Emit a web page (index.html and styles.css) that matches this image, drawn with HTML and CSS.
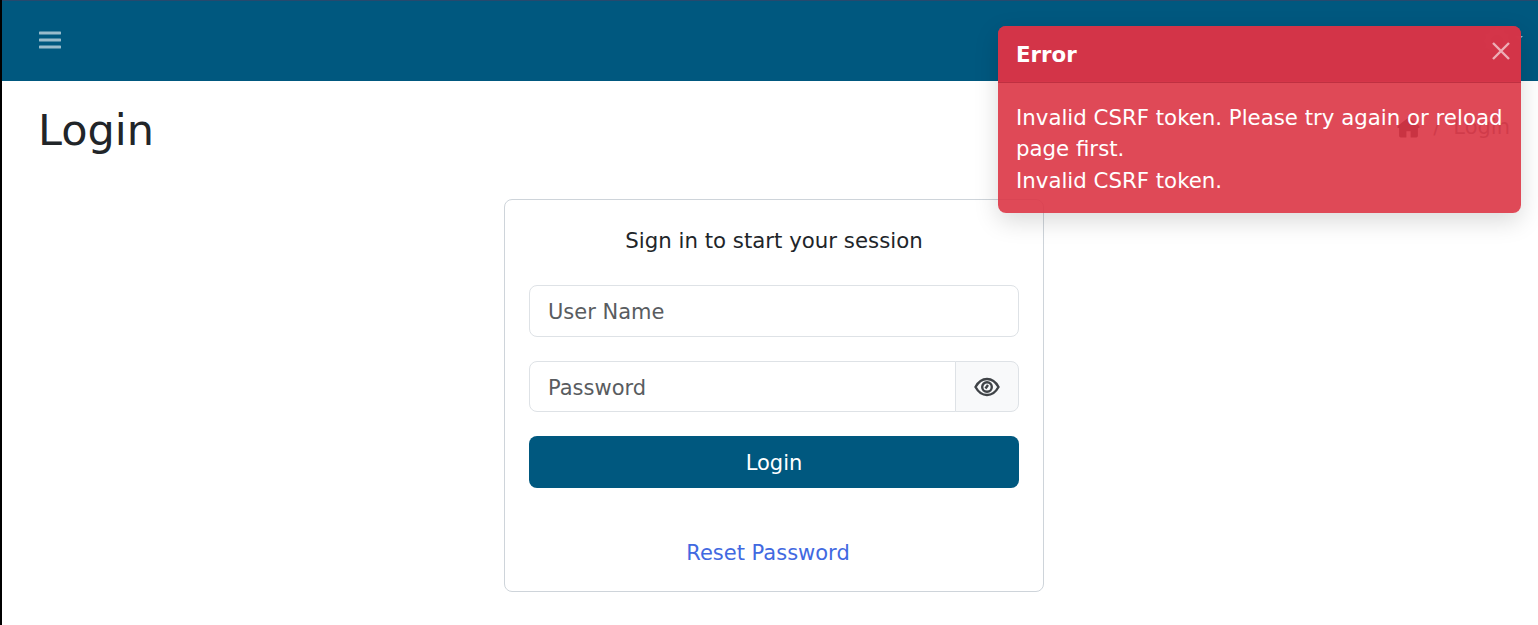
FILE: index.html
```html
<!DOCTYPE html>
<html lang="en">
<head>
    <meta charset="UTF-8">
    <meta name="viewport" content="width=device-width, initial-scale=1.0">
    <title>Login</title>
    <link rel="stylesheet" href="styles.css">
</head>
<body>
    <div class="wrapper">
        <nav class="topbar">
            <button class="menu-btn" aria-label="Menu">
                <svg width="22" height="18" viewBox="0 0 22 18"><path d="M1 2h20M1 9h20M1 16h20" stroke="currentColor" stroke-width="3" stroke-linecap="round"/></svg>
            </button>
            <div class="user-menu">
                <svg class="gear" width="30" height="30" viewBox="0 0 24 24"><path fill="currentColor" fill-rule="evenodd" d="M12 1l2.200 2.600 3.200-1.100.7 3.300 3.300.7-1.100 3.200L23 12l-2.700 2.300 1.100 3.200-3.300.7-.7 3.300-3.200-1.100L12 23l-2.200-2.600-3.200 1.100-.7-3.300-3.300-.7 1.100-3.200L1 12l2.700-2.300-1.100-3.200 3.300-.7.7-3.300 3.200 1.100zM12 7a5 5 0 1 0 0 10 5 5 0 0 0 0-10z"/></svg>
                <span class="caret"></span>
            </div>
        </nav>

        <main class="content">
            <div class="content-header">
                <h1>Login</h1>
                <ol class="breadcrumb">
                    <li class="crumb-home">
                        <svg width="23" height="21" viewBox="0 0 22 20"><path fill="currentColor" fill-rule="evenodd" d="M11 .5L.5 8.500V10.500h1.500v7.500a1.500 1.500 0 0 0 1.500 1.500h15a1.500 1.500 0 0 0 1.500-1.500v-7.500h1.500V8.500zM9 13.500h4v6H9z"/></svg>
                    </li>
                    <li class="sep">/</li>
                    <li>Login</li>
                </ol>
            </div>

            <div class="login-box">
                <p class="login-msg">Sign in to start your session</p>
                <form class="login-form">
                    <input class="form-control" type="text" placeholder="User Name">
                    <div class="input-group">
                        <input class="form-control" type="password" placeholder="Password">
                        <span class="input-addon">
                            <svg width="26" height="20" viewBox="0 0 26 20" fill="none" stroke="currentColor" stroke-width="2.400"><path d="M1.500 10C4.500 4.500 8.500 2 13 2s8.500 2.500 11.500 8C21.500 15.500 17.500 18 13 18S4.500 15.500 1.500 10z"/><circle cx="13" cy="10" r="4.800"/><path d="M11.500 11.500L14 8"/></svg>
                        </span>
                    </div>
                    <button class="login-btn" type="button">Login</button>
                </form>
                <div class="login-links">
                    <a href="#">Reset Password</a>
                </div>
            </div>
        </main>
    </div>

    <div class="toast">
        <div class="toast-header">
            <strong>Error</strong>
            <button class="toast-close" aria-label="Close">
                <svg width="20" height="20" viewBox="0 0 20 20"><path d="M2 2l16 16M18 2L2 18" stroke="currentColor" stroke-width="2.400"/></svg>
            </button>
        </div>
        <div class="toast-body">
            Invalid CSRF token. Please try again or reload page first.<br>
            Invalid CSRF token.
        </div>
    </div>
</body>
</html>
```

FILE: styles.css
```css
* {
    margin: 0;
    padding: 0;
    box-sizing: border-box;
    font-family: "DejaVu Sans", Verdana, sans-serif;
}

body {
    min-height: 100vh;
    background: white;
    color: #212529;
    font-size: 21.3px;
    line-height: 1.5;
    overflow: hidden;
}

.wrapper {
    min-height: 100vh;
    border-left: 2px solid #000;
}

.topbar {
    display: flex;
    justify-content: space-between;
    align-items: center;
    height: 81px;
    padding: 0 15px 2px 37px;
    background: #00587f;
    border-top: 1px solid #27496d;
}

.menu-btn {
    display: flex;
    background: none;
    border: none;
    color: rgba(255,255,255,0.6);
    cursor: pointer;
}

.user-menu {
    display: flex;
    align-items: center;
    gap: 3px;
    margin-top: 2px;
    color: rgba(255,255,255,0.6);
}

.caret {
    margin-top: -6px;
    border-top: 4px solid currentColor;
    border-left: 4px solid transparent;
    border-right: 4px solid transparent;
}

.content {
    padding: 0 28px 0 36px;
}

.content-header {
    display: flex;
    justify-content: space-between;
    align-items: center;
    padding-top: 23px;
    margin-bottom: 43px;
}

h1 {
    font-size: 43px;
    font-weight: 400;
    line-height: 52px;
    color: #212529;
}

.breadcrumb {
    display: flex;
    align-items: center;
    gap: 13px;
    list-style: none;
    color: #6c757d;
    font-size: 21px;
    margin-top: -5px;
}

.breadcrumb li {
    display: flex;
}

.crumb-home {
    color: #212529;
}

.login-box {
    width: 540px;
    margin: 0 0 0 466px;
    padding: 24px 24px 22px;
    background: white;
    border: 1px solid #ced4da;
    border-radius: 8px;
}

.login-msg {
    text-align: center;
    line-height: 34px;
    margin-bottom: 27px;
}

.login-form {
    display: flex;
    flex-direction: column;
    gap: 24px;
}

.form-control {
    width: 100%;
    height: 52px;
    padding: 2px 18px 0;
    border: 1px solid #dee2e6;
    border-radius: 8px;
    font-size: 21px;
    color: #212529;
    background: white;
}

.form-control::placeholder {
    color: #595c5f;
    opacity: 1;
}

.input-group {
    display: flex;
}

.input-group .form-control {
    height: 51px;
    border-radius: 8px 0 0 8px;
}

.input-addon {
    display: flex;
    align-items: center;
    justify-content: center;
    flex: 0 0 64px;
    margin-left: -1px;
    border: 1px solid #dee2e6;
    border-radius: 0 8px 8px 0;
    background: #f8f9fa;
    color: #3f4347;
}

.login-btn {
    height: 52px;
    padding-top: 2px;
    background: #00587f;
    color: white;
    border: none;
    border-radius: 8px;
    font-size: 21px;
    cursor: pointer;
}

.login-links {
    margin-top: 50px;
    padding-right: 12px;
    text-align: center;
    font-size: 21px;
    line-height: 31px;
}

.login-links a {
    color: #4169e1;
    text-decoration: none;
}

.toast {
    position: absolute;
    top: 26px;
    left: 998px;
    width: 523px;
    border-radius: 8px;
    background: rgba(220,53,69,0.9);
    color: white;
    box-shadow: 0 8px 24px rgba(0,0,0,0.15);
    overflow: hidden;
}

.toast-header {
    display: flex;
    justify-content: space-between;
    align-items: center;
    height: 57px;
    padding: 2px 10px 0 18px;
    background: rgba(212,52,72,0.9);
    border-bottom: 1px solid rgba(0,0,0,0.1);
}

.toast-close {
    display: flex;
    background: none;
    border: none;
    color: rgba(255,255,255,0.6);
    cursor: pointer;
    margin-top: -8px;
}

.toast-body {
    padding: 18.6px 18px 17.400px;
    line-height: 31.5px;
}
```
